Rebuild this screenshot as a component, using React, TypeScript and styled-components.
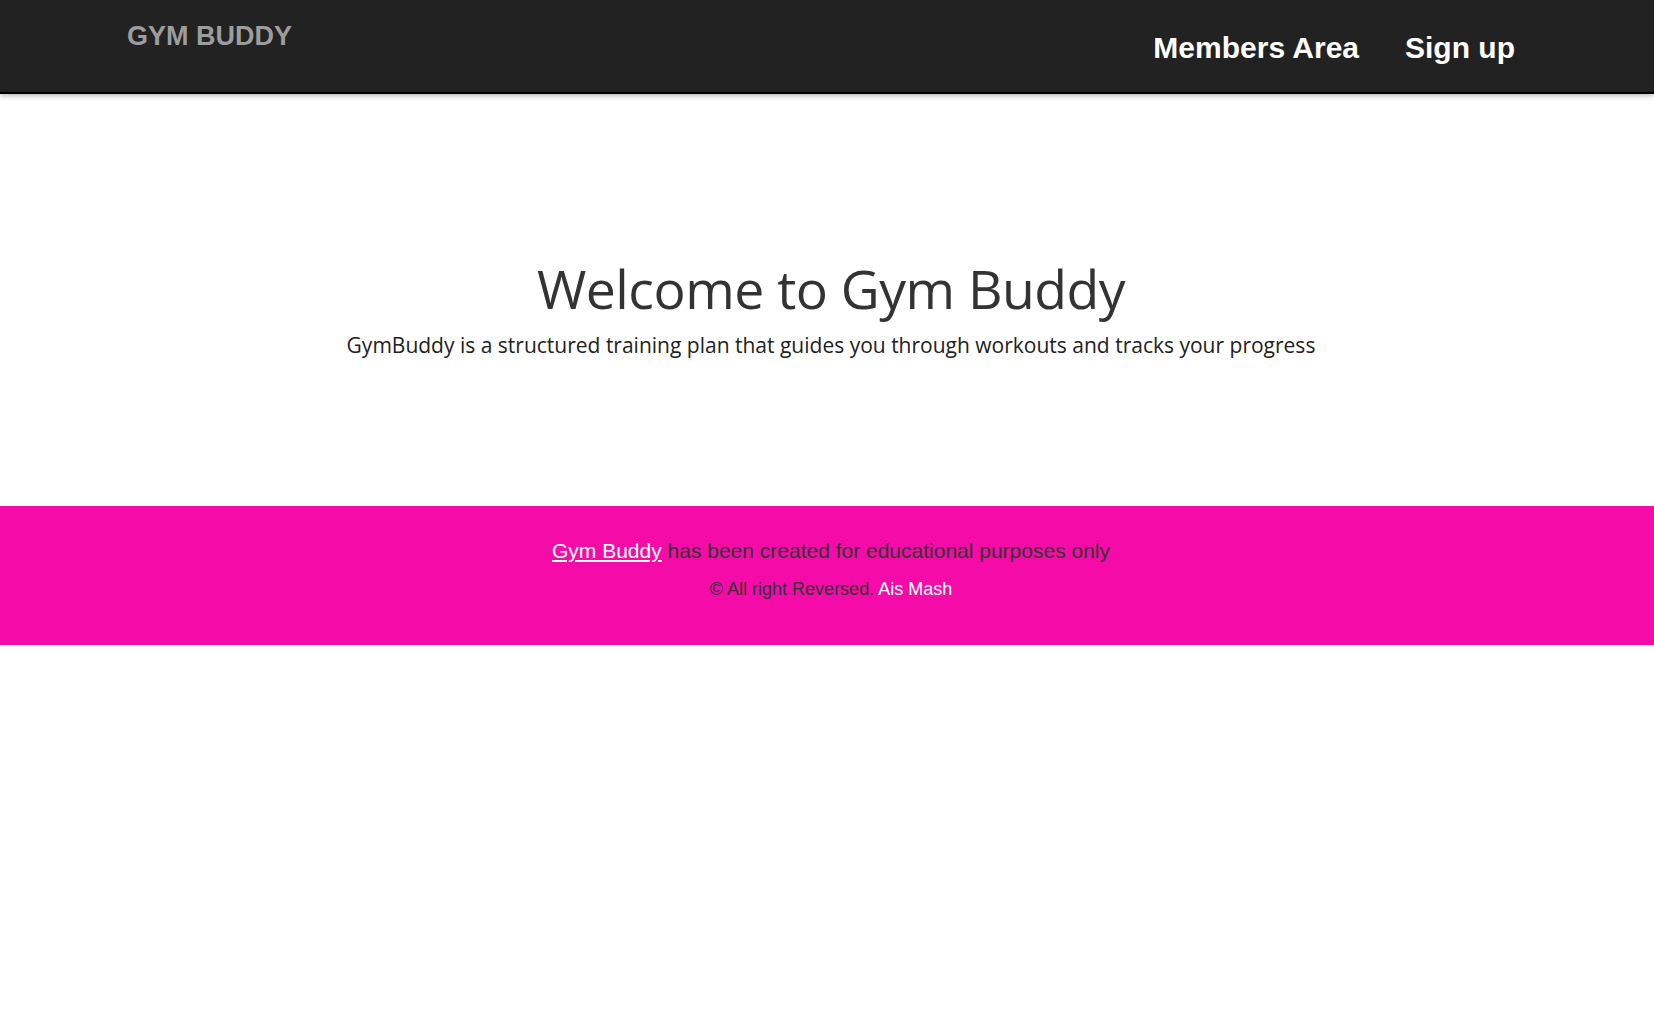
import React from "react";
import styled, { createGlobalStyle } from "styled-components";

const GlobalStyle = createGlobalStyle`
  html, body {
    margin: 0;
    padding: 0;
    background: #ffffff;
  }
  body {
    font-family: "Liberation Sans", Arial, sans-serif;
  }
  * { box-sizing: border-box; }
`;

const Page = styled.div`
  min-height: 1014px;
  background: #ffffff;
`;

const NavBar = styled.header`
  height: 92px;
  background: #222222;
  display: flex;
  justify-content: space-between;
  align-items: flex-start;
  padding: 0 139px 0 127px;
  box-shadow: 0 2px 0 #000000, 0 3px 6px rgba(0, 0, 0, 0.35);
  position: relative;
  z-index: 1;
`;

const Brand = styled.a`
  margin-top: 23px;
  font-family: "Liberation Sans", Arial, sans-serif;
  font-weight: 700;
  font-size: 27px;
  line-height: 1;
  color: #9d9d9d;
  text-decoration: none;
  white-space: nowrap;
`;

const NavLinks = styled.nav`
  display: flex;
  gap: 46px;
  margin-top: 33px;
`;

const NavLink = styled.a`
  font-family: "Liberation Sans", Arial, sans-serif;
  font-weight: 700;
  font-size: 30px;
  line-height: 1;
  color: #ffffff;
  text-decoration: none;
  white-space: nowrap;
`;

const Hero = styled.section`
  height: 414px;
  display: flex;
  flex-direction: column;
  align-items: center;
  padding: 165px 0 0 8px;
  color: #333333;
  font-family: "Comic Sans MS", "Open Sans", sans-serif;
`;

const Title = styled.h1`
  margin: 0;
  font-weight: 400;
  font-size: 53.5px;
  line-height: 64px;
  letter-spacing: -0.5px;
`;

const Lead = styled.p`
  margin: 10px 0 0;
  font-size: 21px;
  line-height: 28px;
  color: #222222;
`;

const Footer = styled.footer`
  height: 139px;
  background: #f50ba7;
  display: flex;
  flex-direction: column;
  align-items: center;
  padding: 34px 0 0 8px;
  color: #333333;
  font-family: "Liberation Sans", Arial, sans-serif;
`;

const FooterLine = styled.p<{ $size: number; $gap?: number }>`
  margin: ${(p) => p.$gap ?? 0}px 0 0;
  font-size: ${(p) => p.$size}px;
  line-height: 1;
  white-space: nowrap;
`;

const FooterLink = styled.a<{ $underline?: boolean }>`
  color: #ffffff;
  text-decoration: ${(p) => (p.$underline ? "underline" : "none")};
`;

export default function App() {
  return (
    <Page>
      <GlobalStyle />
      <NavBar>
        <Brand href="#">GYM BUDDY</Brand>
        <NavLinks>
          <NavLink href="#">Members Area</NavLink>
          <NavLink href="#">Sign up</NavLink>
        </NavLinks>
      </NavBar>
      <Hero>
        <Title>Welcome to Gym Buddy</Title>
        <Lead>
          GymBuddy is a structured training plan that guides you through workouts and tracks your progress
        </Lead>
      </Hero>
      <Footer>
        <FooterLine $size={21}>
          <FooterLink href="#" $underline>
            Gym Buddy
          </FooterLink>{" "}
          has been created for educational purposes only
        </FooterLine>
        <FooterLine $size={18} $gap={19}>
          © All right Reversed. <FooterLink href="#">Ais Mash</FooterLink>
        </FooterLine>
      </Footer>
    </Page>
  );
}
